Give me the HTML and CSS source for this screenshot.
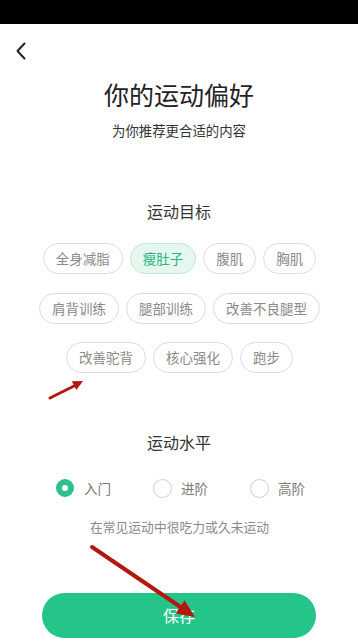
FILE: index.html
```html
<!DOCTYPE html>
<html lang="zh">
<head>
<meta charset="utf-8">
<title>你的运动偏好</title>
<link rel="stylesheet" href="styles.css">
</head>
<body>
<div class="page">
  <div class="status"></div>
  <div class="nav">
    <svg class="back" width="12" height="18" viewBox="0 0 12 18"><path d="M9.5 1.5 L2.5 9 L9.5 16.5" fill="none" stroke="#222" stroke-width="2" stroke-linecap="round" stroke-linejoin="round"/></svg>
  </div>
  <h1 class="title">你的运动偏好</h1>
  <p class="subtitle">为你推荐更合适的内容</p>

  <h2 class="heading heading-goal">运动目标</h2>
  <div class="chips">
    <div class="chip-row">
      <span class="chip">全身减脂</span>
      <span class="chip chip-on">瘦肚子</span>
      <span class="chip">腹肌</span>
      <span class="chip">胸肌</span>
    </div>
    <div class="chip-row">
      <span class="chip">肩背训练</span>
      <span class="chip">腿部训练</span>
      <span class="chip">改善不良腿型</span>
    </div>
    <div class="chip-row">
      <span class="chip">改善驼背</span>
      <span class="chip">核心强化</span>
      <span class="chip">跑步</span>
    </div>
  </div>

  <h2 class="heading heading-level">运动水平</h2>
  <div class="radios">
    <label class="radio"><span class="dot dot-on"></span><span class="radio-text">入门</span></label>
    <label class="radio"><span class="dot"></span><span class="radio-text">进阶</span></label>
    <label class="radio"><span class="dot"></span><span class="radio-text">高阶</span></label>
  </div>
  <p class="desc">在常见运动中很吃力或久未运动</p>

  <div class="save">保存</div>

  <svg class="marks" width="358" height="642" viewBox="0 0 358 642">
    <line x1="50" y1="398" x2="76" y2="385" stroke="#b3180f" stroke-width="3" stroke-linecap="round"/>
    <polygon points="83,381 76.4,390 71.8,381.2" fill="#b3180f"/>
    <line x1="92" y1="547" x2="182" y2="608" stroke="#b3180f" stroke-width="4" stroke-linecap="round"/>
    <polygon points="195,617 175.6,613.5 184.6,600.3" fill="#b3180f"/>
  </svg>
</div>
</body>
</html>
```

FILE: styles.css
```css
html, body {
  margin: 0;
  padding: 0;
  background: #fff;
}
.page {
  position: relative;
  width: 358px;
  height: 642px;
  overflow: hidden;
  font-family: "Noto Sans CJK SC", "Noto Sans", sans-serif;
  color: #333;
  display: flex;
  flex-direction: column;
  align-items: center;
}
.status {
  align-self: stretch;
  height: 24px;
  background: #000;
}
.nav {
  align-self: stretch;
  height: 54px;
  display: flex;
  align-items: center;
  padding-left: 15px;
}
.back {
  display: block;
}
.title {
  margin: 0;
  font-size: 25px;
  line-height: 32px;
  font-weight: 400;
  color: #222;
}
.subtitle {
  margin: 10px 0 0;
  font-size: 13.4px;
  line-height: 20px;
  color: #333;
}
.heading {
  margin: 0;
  font-size: 16px;
  line-height: 22px;
  font-weight: 400;
  color: #333;
}
.heading-goal {
  margin-top: 60px;
}
.chips {
  margin-top: 21px;
  display: flex;
  flex-direction: column;
  gap: 18.5px;
  align-items: center;
}
.chip-row {
  display: flex;
  gap: 7px;
  padding-left: 1px;
}
.chip {
  height: 31px;
  box-sizing: border-box;
  padding: 0 12px;
  border: 1px solid #dcdcdc;
  border-radius: 16px;
  font-size: 13.5px;
  line-height: 29px;
  color: #8a8a8a;
  white-space: nowrap;
}
.chip-on {
  background: #e5f7ef;
  border-color: #bfe8d6;
  color: #2bb37e;
}
.heading-level {
  margin-top: 58px;
}
.radios {
  margin-top: 25px;
  height: 20px;
  display: flex;
  gap: 42px;
  padding-left: 3px;
}
.radio {
  display: flex;
  align-items: center;
  gap: 9px;
}
.dot {
  width: 19px;
  height: 19px;
  box-sizing: border-box;
  border: 1px solid #cfcfcf;
  border-radius: 50%;
}
.dot-on {
  width: 18px;
  height: 18px;
  border: 6px solid #2cc08a;
  background: #fff;
  margin-right: 1px;
}
.radio-text {
  font-size: 13.5px;
  line-height: 20px;
  color: #7a7a7a;
}
.desc {
  margin: 20px 0 0;
  font-size: 12.8px;
  line-height: 18px;
  color: #8a8a8a;
  padding-left: 1px;
}
.save {
  margin-top: 57px;
  width: 274px;
  height: 45px;
  border-radius: 23px;
  background: #25c489;
  color: #fff;
  font-size: 16px;
  line-height: 45px;
  text-align: center;
}
.marks {
  position: absolute;
  left: 0;
  top: 0;
  pointer-events: none;
}
```
